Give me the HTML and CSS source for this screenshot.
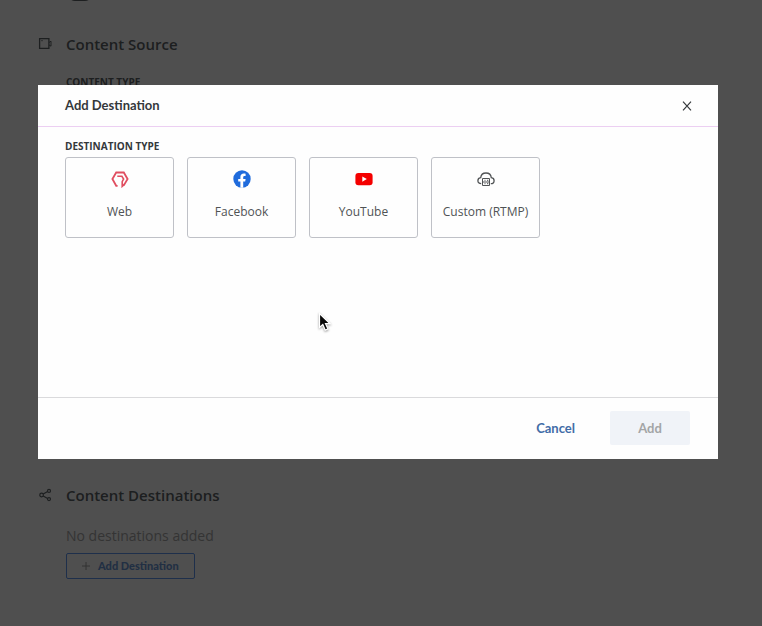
FILE: index.html
```html
<!DOCTYPE html>
<html lang="en">
<head>
<meta charset="utf-8">
<title>Add Destination</title>
<link rel="stylesheet" href="styles.css">
</head>
<body>
<main class="page">
  <div class="previous"><span class="toggle"></span></div>
  <section class="section source">
    <svg class="section-icon" viewBox="0 0 14 14" fill="none" stroke="currentColor"><path d="M1.6 1.6h9.3v9.8H1.6z" stroke-width="1.3"/><path d="M11 5.5l2-1.3v5l-2-1.3M3.3 3.7h1.4"/></svg>
    <div class="section-content">
      <h2>Content Source</h2>
      <p class="label">CONTENT TYPE</p>
    </div>
  </section>
  <section class="section">
    <svg class="section-icon" viewBox="0 0 14 14" fill="none" stroke="currentColor" stroke-width="1.2"><circle cx="3.6" cy="7" r="1.8"/><circle cx="11" cy="2.9" r="1.5"/><circle cx="11" cy="11.1" r="1.5"/><path d="M5.2 6.1l4.4-2.5M5.2 7.9l4.4 2.5"/></svg>
    <div class="section-content">
      <h2>Content Destinations</h2>
      <p class="empty">No destinations added</p>
      <button class="outline" type="button"><svg viewBox="0 0 8 8" stroke="currentColor" fill="none"><path d="M4 0v8M0 4h8"/></svg>Add Destination</button>
    </div>
  </section>
</main>

<div class="overlay">
  <div class="modal" role="dialog" aria-modal="true" aria-labelledby="modal-title">
    <header class="modal-header">
      <h1 id="modal-title">Add Destination</h1>
      <button class="close" type="button" aria-label="Close"><svg viewBox="0 0 10 10" fill="none" stroke="currentColor" stroke-width="1.2"><path d="M1 .7l8 8.6M9 .7L1 9.3"/></svg></button>
    </header>
    <div class="modal-body">
      <p class="label" id="type-label">DESTINATION TYPE</p>
      <div class="types" role="group" aria-labelledby="type-label">
        <button class="type" type="button">
          <svg viewBox="0 0 18 18" fill="none" stroke="#e04e60" stroke-width="1.8"><path d="M6.6 15.8H5.2L1.4 9l3.8-6.5h7.6L16.6 9l-3.8 6.4"/><path d="M6.3 6.3h4.6L12.6 9l-1.4 2.6v4.8l2.4-2.2" stroke-width="1.6"/></svg>
          <span>Web</span>
        </button>
        <button class="type" type="button">
          <svg viewBox="0 0 18 18"><circle cx="9" cy="9" r="8.7" fill="#1f6bdc"/><path fill="#fff" d="M7.4 17.7v-6.2H5.2V9h2.2V7.1c0-2.3 1.3-3.5 3.4-3.5.9 0 1.8.2 1.8.2v2.1h-1c-1.1 0-1.4.6-1.4 1.3V9h2.4l-.4 2.5h-2v6.2z"/></svg>
          <span>Facebook</span>
        </button>
        <button class="type" type="button">
          <svg viewBox="0 0 18 18"><rect x=".4" y="3" width="17.2" height="12.2" rx="3" fill="#f40000"/><path fill="#fff" d="M7.3 6.5v5.2L11.8 9z"/></svg>
          <span>YouTube</span>
        </button>
        <button class="type" type="button">
          <svg viewBox="0 0 18 18" fill="none" stroke="#505355" stroke-width="1.3"><path d="M4.2 13.7C2 13.7.9 12.3.9 10.7c0-1.7 1.2-2.8 2.8-3C4 4.9 6.2 3 9 3s5 1.9 5.3 4.7c1.6.2 2.8 1.3 2.8 3 0 1.6-1.1 3-3.3 3"/><path d="M5.5 8.5h7v7h-7zM5.5 12h7M7.5 10.3h1M7.5 13.7h1M10 10.3h1.3M10 13.7h1.3" stroke-width="1"/></svg>
          <span>Custom (RTMP)</span>
        </button>
      </div>
    </div>
    <footer class="modal-footer">
      <button class="cancel" type="button">Cancel</button>
      <button class="add" type="button" disabled>Add</button>
    </footer>
  </div>
</div>
<svg class="cursor" viewBox="0 0 14 20" aria-hidden="true"><path d="M1.5 1.5v14l3.3-3 2.4 5.6 2.8-1.2-2.5-5.2h4.6z" fill="#080808" stroke="#fff" stroke-width="1.2"/></svg>
</body>
</html>
```
FILE: styles.css
```css
* { box-sizing: border-box; }

body {
  margin: 0;
  min-height: 100vh;
  background: #fff;
  color: #34383b;
  font-family: "Open Sans", "Noto Sans", sans-serif;
  overflow: hidden;
}

h1, h2, p { margin: 0; }

button {
  font: inherit;
  color: inherit;
  border: 0;
  background: none;
  padding: 0;
}

.page {
  padding: 0 38px;
  color: #5e6468;
}

.previous {
  height: 14px;
  margin: -13px 0 32px 30px;
}

.toggle {
  display: block;
  width: 24px;
  height: 14px;
  border: 2px solid currentColor;
  border-radius: 8px;
}

.section {
  display: flex;
  align-items: flex-start;
  gap: 14px;
}

.source { min-height: 451px; }

.section-icon {
  width: 14px;
  height: 14px;
  margin-top: 4px;
}

.section h2 {
  font-size: 15px;
  font-weight: 600;
  line-height: 22px;
}

.label {
  font-size: 10px;
  font-weight: 700;
  line-height: 16px;
}

.source .label { margin-top: 19px; }

.empty {
  margin-top: 18px;
  color: #a8a8a8;
  font-size: 14px;
  line-height: 24px;
}

.outline {
  display: flex;
  align-items: center;
  justify-content: center;
  gap: 8px;
  height: 26px;
  margin-top: 5px;
  padding: 0 15px;
  border: 1px solid #6098f0;
  border-radius: 2px;
  color: #6c98d8;
  font: 900 11px/16px Lato, sans-serif;
}

.outline svg {
  width: 8px;
  height: 8px;
  color: #a0a0a0;
}

.overlay {
  position: fixed;
  inset: 0;
  padding: 85px 44px 20px 38px;
  background: rgba(0, 0, 0, 0.69);
}

.modal {
  background: #fefefe;
}

.modal-header {
  display: flex;
  align-items: center;
  justify-content: space-between;
  padding: 10px 26px 10px 27px;
  border-bottom: 1px solid #eccff2;
}

.modal-header h1 {
  font: 700 13px/21px Lato, sans-serif;
}

.close {
  display: flex;
  padding: 0;
}

.close svg {
  width: 10px;
  height: 10px;
}

.modal-body {
  min-height: 270px;
  padding: 11px 27px;
}

.types {
  display: grid;
  grid-template-columns: repeat(auto-fill, 109px);
  gap: 13px;
  margin-top: 3px;
}

.type {
  display: flex;
  flex-direction: column;
  align-items: center;
  gap: 15px;
  height: 81px;
  padding-top: 12px;
  border: 1px solid #bfc1c7;
  border-radius: 3px;
  color: #505355;
  font-size: 12px;
  line-height: 18px;
}

.type svg {
  width: 18px;
  height: 18px;
}

.modal-footer {
  display: flex;
  justify-content: flex-end;
  gap: 35px;
  padding: 13px 28px 14px;
  border-top: 1px solid #dadadc;
  font: 700 13px/20px Lato, sans-serif;
}

.cancel { color: #426ca7; }

.add {
  width: 80px;
  height: 34px;
  border-radius: 2px;
  background: #f0f3f8;
  color: #a3a5a6;
}

.cursor {
  position: fixed;
  left: 318px;
  top: 312px;
  width: 14px;
  height: 20px;
  filter: drop-shadow(0 1px 1px rgba(0, 0, 0, 0.4));
}
```
